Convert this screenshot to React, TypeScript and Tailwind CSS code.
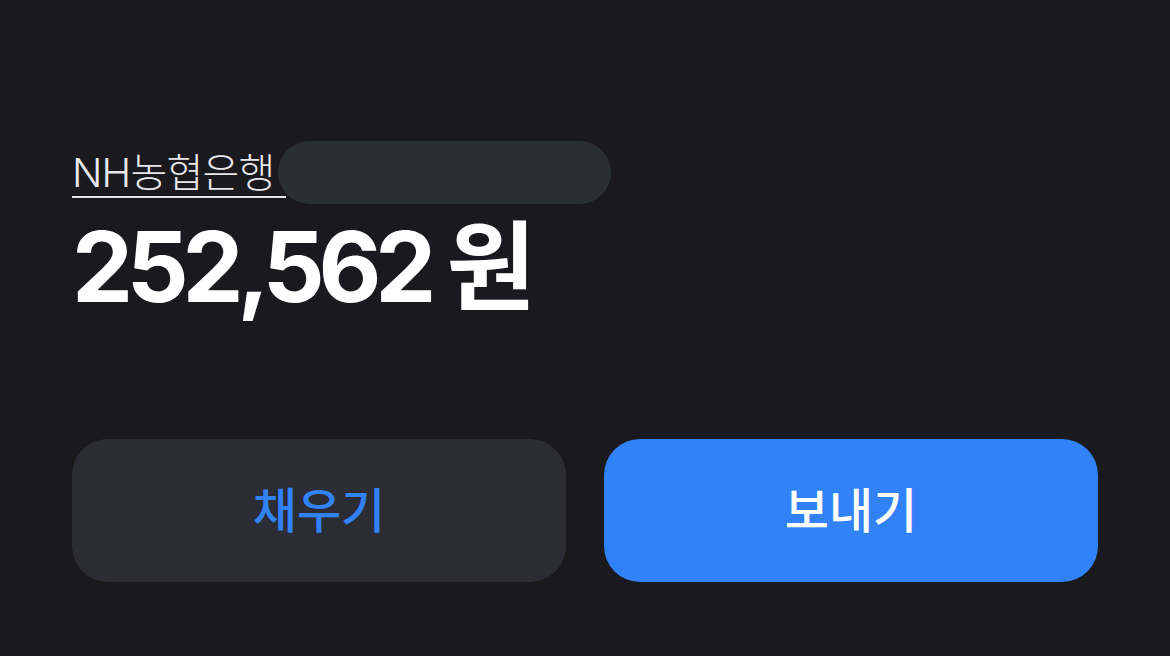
export default function App() {
  return (
    <div className="w-[1170px] h-[656px] bg-[#1a191e] px-[72px] pt-[141px] font-['Inter','Noto_Sans_CJK_KR',sans-serif] overflow-hidden">
      <div className="flex items-center h-[63px]">
        <span className="text-[40px] font-light text-[#e8e8ec] leading-none tracking-[-0.02em] border-b-2 border-[#e8e8ec] pb-[3px] pr-[12px] mt-[6px]">
          NH농협은행
        </span>
        <div className="w-[333px] h-[63px] rounded-full bg-[#2a2f33] -ml-[8px] shrink-0" />
      </div>
      <div className="mt-[14px] text-[97px] font-bold text-white leading-none tracking-[-0.065em]">
        252,562 원
      </div>
      <div className="mt-[124px] grid grid-cols-2 gap-[38px]">
        <button className="h-[143px] rounded-[36px] bg-[#2c2c35] text-[#3182f6] text-[48px] font-medium">
          채우기
        </button>
        <button className="h-[143px] rounded-[36px] bg-[#3182f6] text-white text-[48px] font-medium">
          보내기
        </button>
      </div>
    </div>
  );
}
